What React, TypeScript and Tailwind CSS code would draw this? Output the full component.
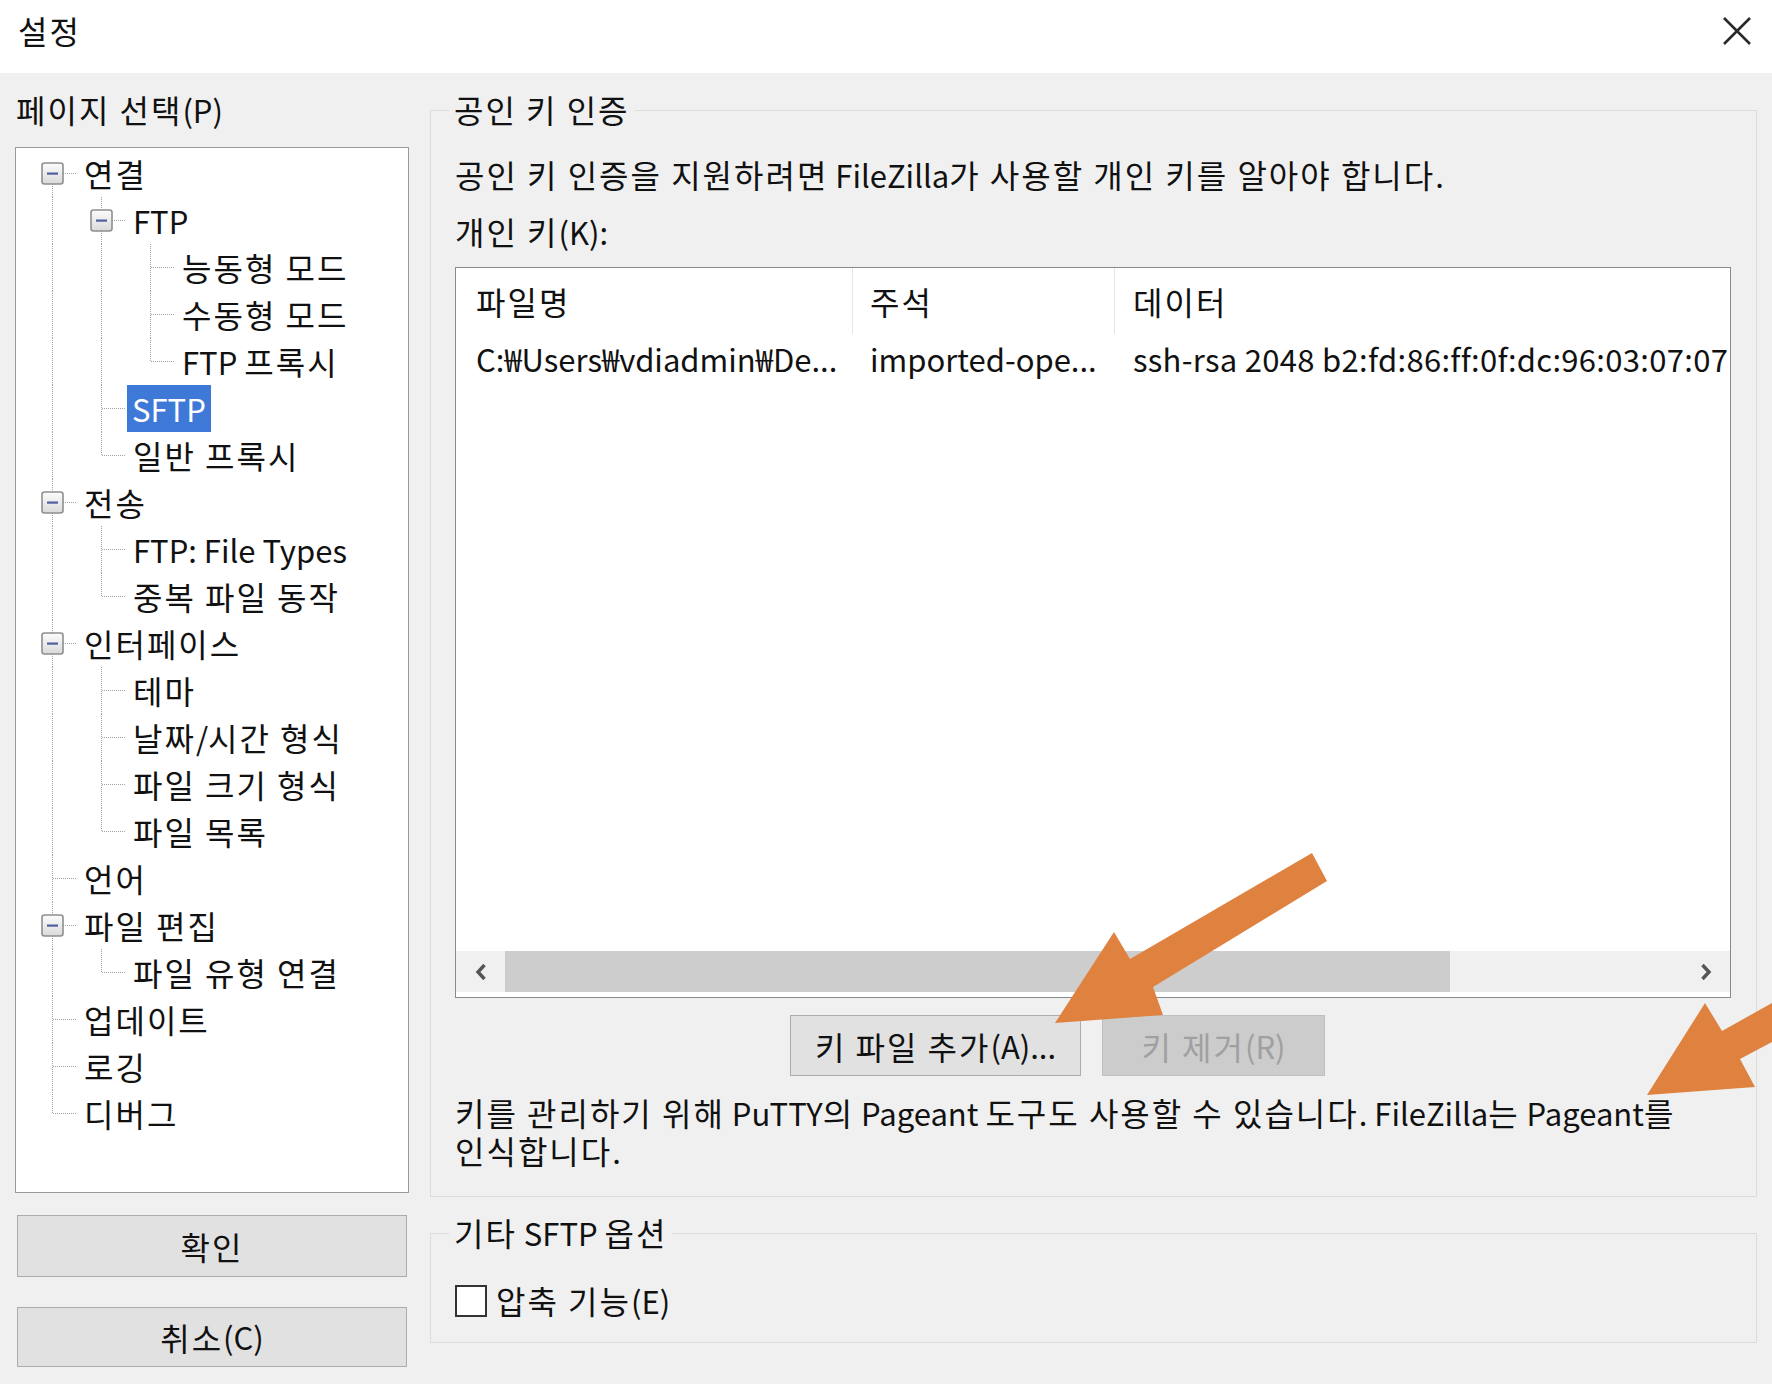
import React from 'react';

type TNode = { label: string; children?: TNode[]; selected?: boolean };

const TREE: TNode[] = [
  {
    label: '연결',
    children: [
      { label: 'FTP', children: [{ label: '능동형 모드' }, { label: '수동형 모드' }, { label: 'FTP 프록시' }] },
      { label: 'SFTP', selected: true },
      { label: '일반 프록시' },
    ],
  },
  { label: '전송', children: [{ label: 'FTP: File Types' }, { label: '중복 파일 동작' }] },
  {
    label: '인터페이스',
    children: [{ label: '테마' }, { label: '날짜/시간 형식' }, { label: '파일 크기 형식' }, { label: '파일 목록' }],
  },
  { label: '언어' },
  { label: '파일 편집', children: [{ label: '파일 유형 연결' }] },
  { label: '업데이트' },
  { label: '로깅' },
  { label: '디버그' },
];

type Flat = {
  label: string;
  depth: number;
  guides: boolean[];
  hasNext: boolean;
  hasChildren: boolean;
  isFirst: boolean;
  selected?: boolean;
};

function flatten(nodes: TNode[], depth: number, guides: boolean[], out: Flat[]): Flat[] {
  nodes.forEach((n, i) => {
    const hasNext = i < nodes.length - 1;
    out.push({
      label: n.label,
      depth,
      guides,
      hasNext,
      hasChildren: !!n.children,
      isFirst: depth === 0 && i === 0,
      selected: n.selected,
    });
    if (n.children) flatten(n.children, depth + 1, [...guides, hasNext], out);
  });
  return out;
}

/* Hangul runs get the wider glyphs/spacing of the original Windows font */
function K({ t }: { t: string }) {
  const parts = t.split(/([가-힣]+(?:\s+[가-힣]+)*)/);
  return (
    <>
      {parts.map((p, i) =>
        /[가-힣]/.test(p) ? (
          <span key={i} className="text-[32px] leading-none tracking-[2px]">
            {p}
          </span>
        ) : (
          <React.Fragment key={i}>{p}</React.Fragment>
        ),
      )}
    </>
  );
}

const LINE = '#a3a3a3';

function GuideCell({ cont }: { cont: boolean }) {
  return (
    <svg width="49" height="47" className="shrink-0" shapeRendering="crispEdges">
      {cont && <line x1="36.5" y1="0" x2="36.5" y2="47" stroke={LINE} strokeDasharray="1 1" />}
    </svg>
  );
}

function OwnCell({ item }: { item: Flat }) {
  return (
    <svg width="60" height="47" className="shrink-0">
      <g shapeRendering="crispEdges">
        {!item.isFirst && <line x1="36.5" y1="0" x2="36.5" y2="23" stroke={LINE} strokeDasharray="1 1" />}
        {item.hasNext && <line x1="36.5" y1="24" x2="36.5" y2="47" stroke={LINE} strokeDasharray="1 1" />}
        <line x1="37" y1="23.5" x2="60" y2="23.5" stroke={LINE} strokeDasharray="1 1" />
      </g>
      {item.hasChildren && (
        <g>
          <defs>
            <linearGradient id="exp" x1="0" y1="0" x2="0" y2="1">
              <stop offset="0" stopColor="#fcfcfc" />
              <stop offset="1" stopColor="#dadada" />
            </linearGradient>
          </defs>
          <rect x="26" y="13" width="21" height="21" rx="2.5" fill="url(#exp)" stroke="#8f8f8f" strokeWidth="1.6" />
          <rect x="31" y="22.5" width="11" height="2.2" fill="#4f5f9f" />
        </g>
      )}
    </svg>
  );
}

function TreeView() {
  const rows = flatten(TREE, 0, [], []);
  return (
    <div className="flex flex-col pt-[2px]">
      {rows.map((r, i) => (
        <div key={i} className="flex h-[47px] items-center">
          {r.guides.map((g, j) => (
            <GuideCell key={j} cont={g} />
          ))}
          <OwnCell item={r} />
          <span
            className={
              r.selected
                ? 'ml-[2px] bg-[#3f79d8] px-[5px] leading-[47px] whitespace-nowrap text-white'
                : 'ml-[2px] px-[6px] leading-[45px] whitespace-nowrap'
            }
          >
            <K t={r.label} />
          </span>
        </div>
      ))}
    </div>
  );
}

function Chevron({ dir }: { dir: 'left' | 'right' }) {
  return (
    <svg width="16" height="22" viewBox="0 0 16 22">
      <path
        d={dir === 'left' ? 'M11.5 4 L5 11 L11.5 18' : 'M4.5 4 L11 11 L4.5 18'}
        fill="none"
        stroke="#555"
        strokeWidth="3.4"
      />
    </svg>
  );
}

export default function App() {
  return (
    <div className="relative h-[1384px] w-[1772px] overflow-hidden bg-[#f0f0f0] font-['Noto_Sans_CJK_KR',sans-serif] text-[31px] leading-[38px] text-[#111]">
      {/* Title bar */}
      <div className="flex h-[73px] items-center justify-between bg-white pr-[20px] pb-[11px] pl-[18px]">
        <span className="leading-[38px]">
          <K t="설정" />
        </span>
        <svg width="30" height="30" viewBox="0 0 30 30">
          <path d="M2 2 L28 28 M28 2 L2 28" stroke="#2a2a2a" strokeWidth="2.6" />
        </svg>
      </div>

      {/* Body */}
      <div className="flex gap-[21px] pt-[18px] pr-[15px] pl-[15px]">
        {/* Left column */}
        <div className="flex w-[394px] shrink-0 flex-col">
          <div className="pl-[1px]">
            <K t="페이지 선택(P)" />
          </div>
          <div className="mt-[18px] h-[1046px] border border-[#9a9a9a] bg-white">
            <TreeView />
          </div>
          <button className="mx-[2px] mt-[22px] flex h-[62px] items-center justify-center border border-[#adadad] bg-[#e1e1e1]">
            <K t="확인" />
          </button>
          <button className="mx-[2px] mt-[30px] flex h-[60px] items-center justify-center border border-[#adadad] bg-[#e1e1e1]">
            <K t="취소(C)" />
          </button>
        </div>

        {/* Right column */}
        <div className="flex min-w-0 flex-1 flex-col">
          <fieldset className="min-w-0 border border-[#dcdcdc] pr-[25px] pb-[26px] pl-[24px]">
            <legend className="ml-[-6px] px-[5px]">
              <K t="공인 키 인증" />
            </legend>
            <div className="pt-[27px] whitespace-nowrap">
              <K t="공인 키 인증을 지원하려면 FileZilla가 사용할 개인 키를 알아야 합니다." />
            </div>
            <div className="mt-[19px]">
              <K t="개인 키(K):" />
            </div>
            <div className="mt-[16px] flex h-[731px] min-w-0 flex-col overflow-hidden border border-[#8a8a8a] bg-white">
              <div className="flex h-[66px] shrink-0">
                <div className="flex w-[397px] shrink-0 items-center border-r border-[#e5e5e5] pl-[20px]">
                  <K t="파일명" />
                </div>
                <div className="flex w-[262px] shrink-0 items-center border-r border-[#e5e5e5] pl-[17px]">
                  <K t="주석" />
                </div>
                <div className="flex flex-1 items-center pl-[18px]">
                  <K t="데이터" />
                </div>
              </div>
              <div className="flex h-[50px] shrink-0 items-center whitespace-nowrap">
                <div className="w-[397px] shrink-0 pl-[20px]">C:₩Users₩vdiadmin₩De...</div>
                <div className="w-[262px] shrink-0 pl-[17px]">imported-ope...</div>
                <div className="min-w-0 flex-1 pl-[18px] tracking-[0.3px]">ssh-rsa 2048 b2:fd:86:ff:0f:dc:96:03:07:07</div>
              </div>
              <div className="flex-1" />
              <div className="mb-[5px] flex h-[41px] shrink-0 bg-[#f0f0f0]">
                <div className="flex w-[49px] shrink-0 items-center justify-center">
                  <Chevron dir="left" />
                </div>
                <div className="flex flex-1">
                  <div className="w-[945px] bg-[#cdcdcd]" />
                </div>
                <div className="flex w-[49px] shrink-0 items-center justify-center">
                  <Chevron dir="right" />
                </div>
              </div>
            </div>
            <div className="mt-[17px] flex gap-[21px] pl-[335px]">
              <button className="flex h-[61px] w-[291px] items-center justify-center border border-[#adadad] bg-[#e1e1e1]">
                <K t="키 파일 추가(A)..." />
              </button>
              <button className="flex h-[61px] w-[223px] items-center justify-center border border-[#bfbfbf] bg-[#cccccc] text-[#a0a0a0]">
                <K t="키 제거(R)" />
              </button>
            </div>
            <div className="mt-[18px] whitespace-nowrap">
              <div>
                <K t="키를 관리하기 위해 PuTTY의 Pageant 도구도 사용할 수 있습니다. FileZilla는 Pageant를" />
              </div>
              <div>
                <K t="인식합니다." />
              </div>
            </div>
          </fieldset>

          <fieldset className="mt-[17px] min-w-0 border border-[#dcdcdc] pr-[25px] pb-[22px] pl-[24px]">
            <legend className="ml-[-6px] px-[5px]">
              <K t="기타 SFTP 옵션" />
            </legend>
            <label className="mt-[30px] flex items-center gap-[9px]">
              <span className="h-[32px] w-[32px] border-2 border-[#333] bg-white" />
              <span>
                <K t="압축 기능(E)" />
              </span>
            </label>
          </fieldset>
        </div>
      </div>

      {/* Annotation arrows */}
      <svg className="pointer-events-none absolute top-0 left-0" width="1772" height="1384" viewBox="0 0 1772 1384">
        <polygon points="1312,853 1327,881 1153,987 1163,1015 1055,1023 1114,932 1130,959" fill="#e0823f" />
        <polygon points="1772,1003 1772,1042 1740,1059 1755,1087 1647,1095 1705,1003 1722,1031" fill="#e0823f" />
      </svg>
    </div>
  );
}
